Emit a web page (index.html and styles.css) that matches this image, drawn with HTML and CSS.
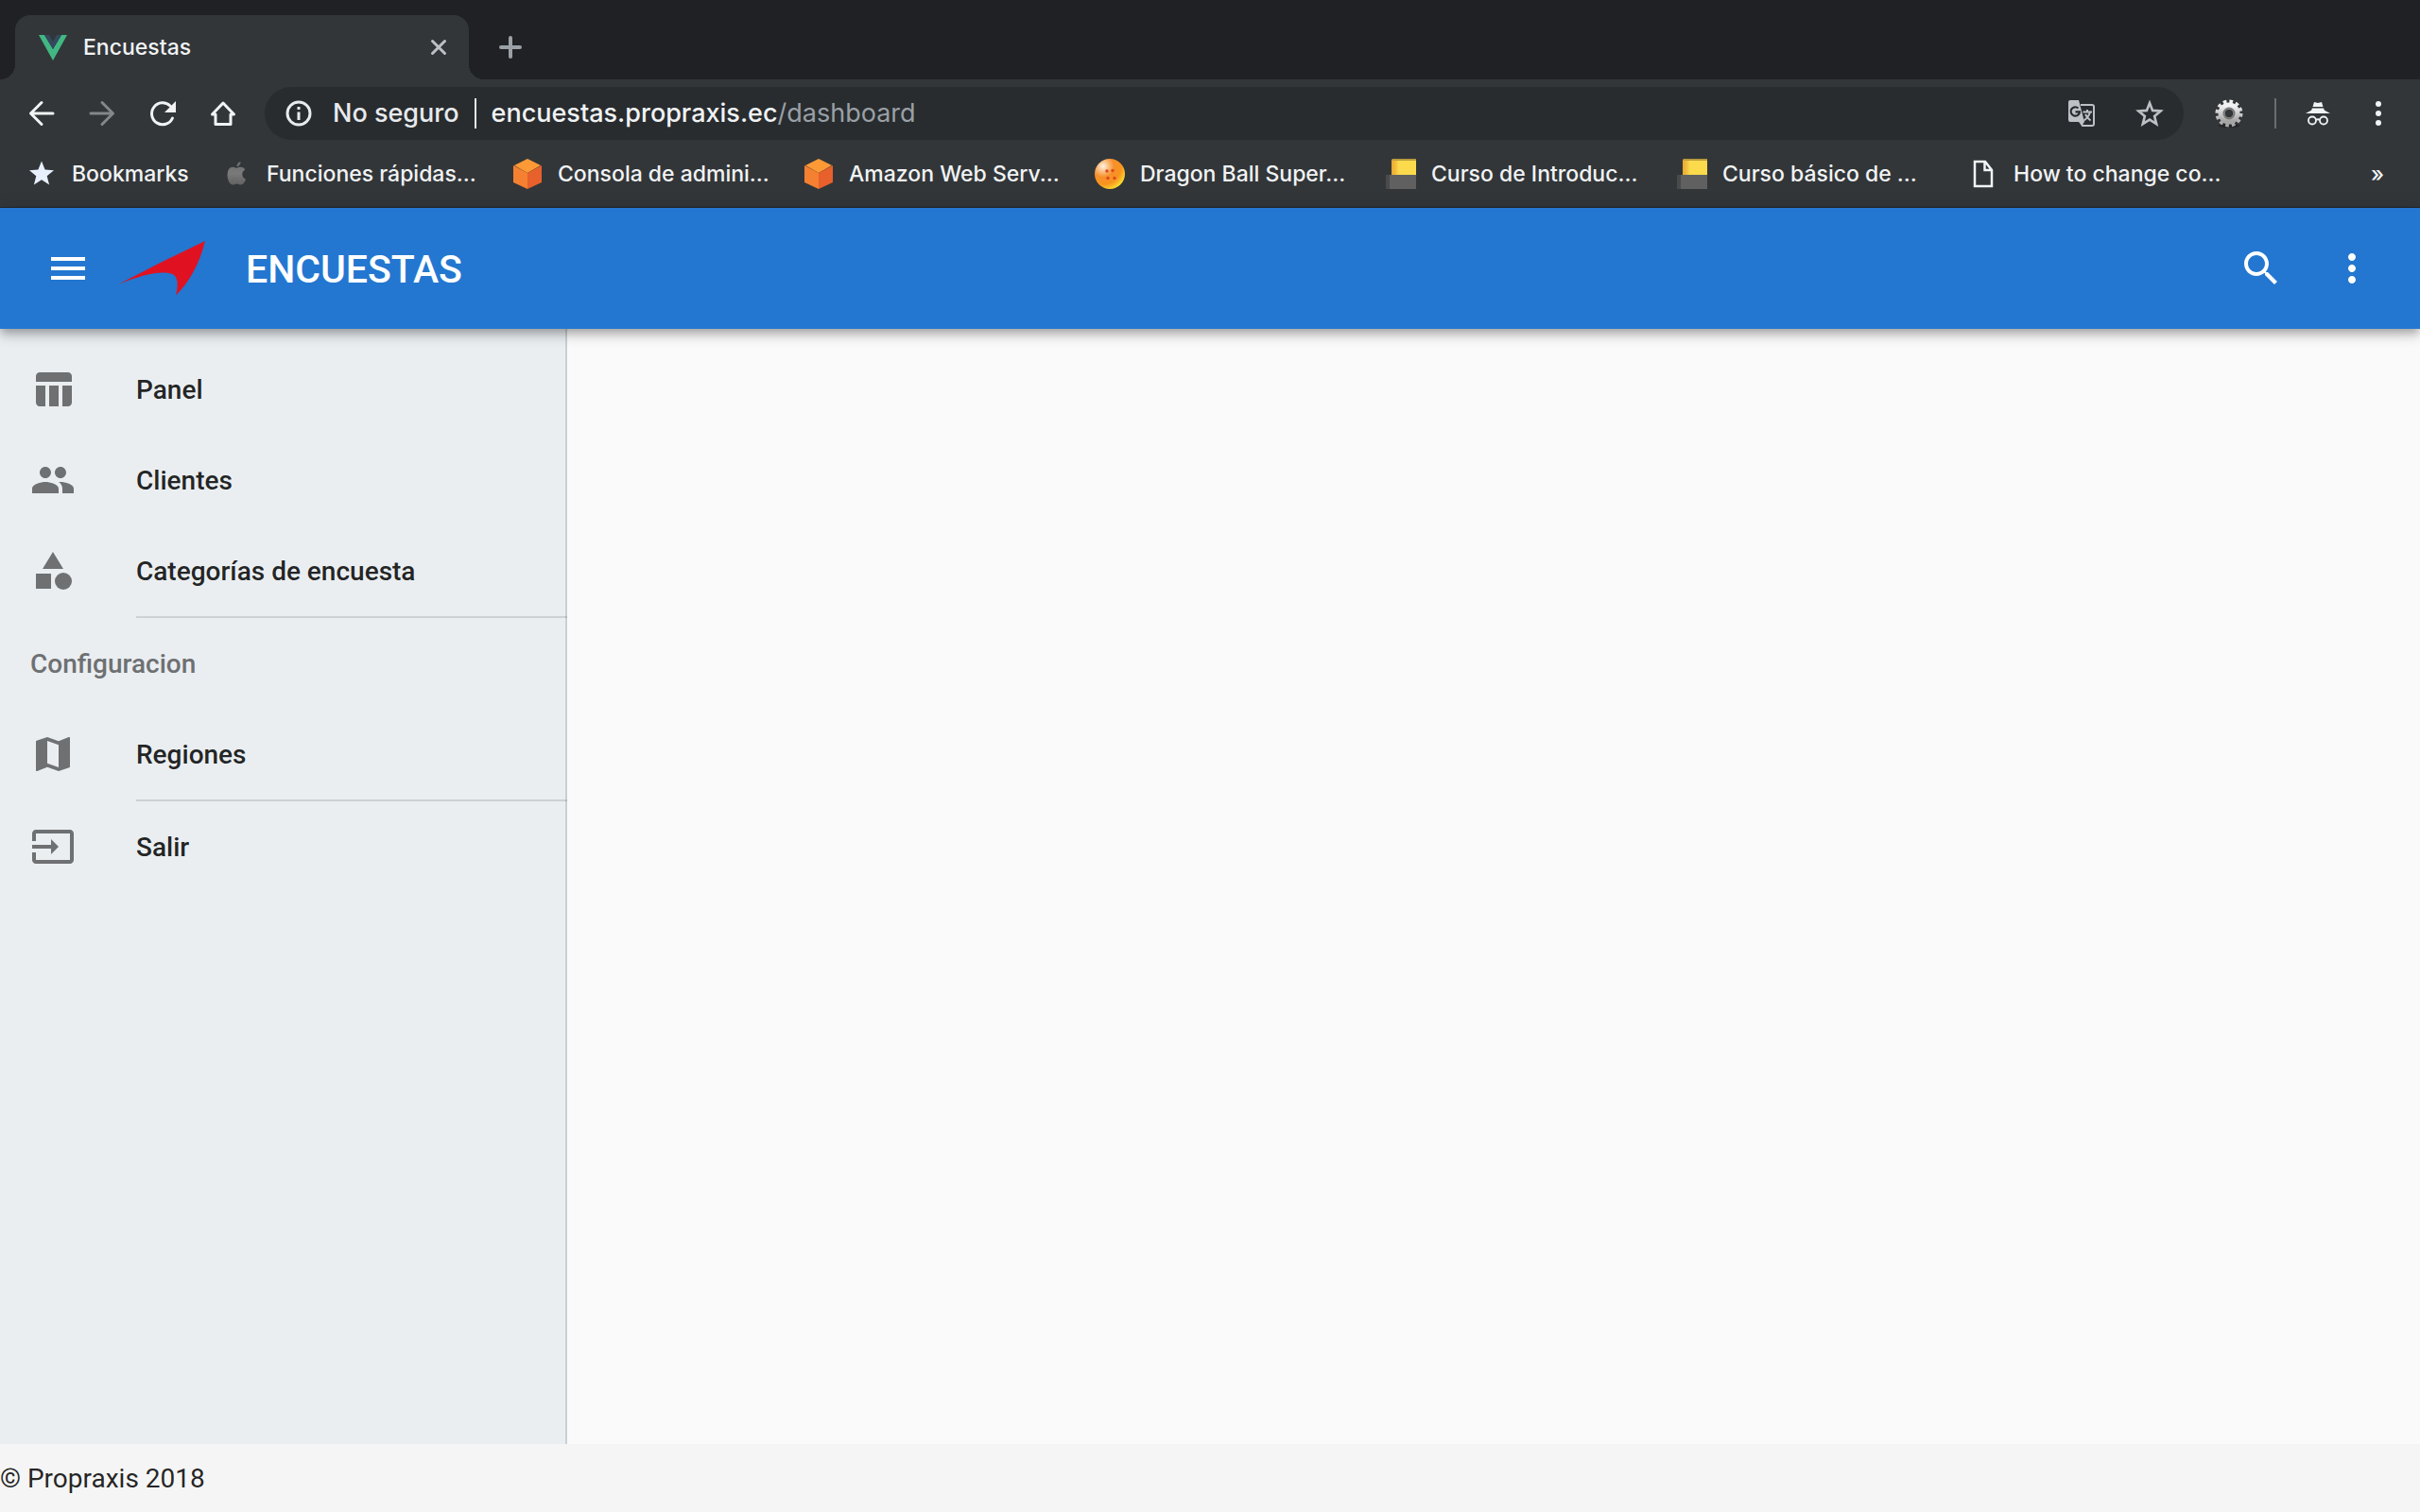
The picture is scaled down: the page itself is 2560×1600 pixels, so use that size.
FILE: index.html
```html
<!DOCTYPE html>
<html lang="es">
<head>
<meta charset="utf-8">
<meta name="viewport" content="width=device-width, initial-scale=1">
<title>Encuestas</title>
<link rel="stylesheet" href="styles.css">
</head>
<body>
<svg class="defs" aria-hidden="true">
  <defs>
    <linearGradient id="book-cover" x1="0" x2="1" y1="0" y2="0"><stop offset="0" stop-color="#e9a92f"/><stop offset=".2" stop-color="#f5c342"/><stop offset=".3" stop-color="#fbdb4c"/></linearGradient>
    <linearGradient id="apple-fill" x1="0" x2="0" y1="0" y2="1"><stop offset="0" stop-color="#6c6c6c"/><stop offset=".5" stop-color="#7a7a7a"/><stop offset="1" stop-color="#626262"/></linearGradient>
    <linearGradient id="gear-fill" x1="0" x2="0" y1="0" y2="1"><stop offset="0" stop-color="#f2f2f2"/><stop offset="1" stop-color="#a5a5a5"/></linearGradient>
    <radialGradient id="ball-fill" cx=".28" cy=".25" r=".8"><stop offset="0" stop-color="#fff4e4"/><stop offset=".2" stop-color="#fbc48c"/><stop offset=".45" stop-color="#f78f2a"/><stop offset=".75" stop-color="#f8941f"/><stop offset="1" stop-color="#fbd72e"/></radialGradient>
  </defs>
  <symbol id="cube" viewBox="0 0 32 32">
    <path fill="#fd9a36" d="M16 0l14 7-14 8L2 7z"/>
    <path fill="#f58031" d="M1 7l15 8v17L1 25z"/>
    <path fill="#e8602b" d="M31 7l-15 8v17l15-7z"/>
  </symbol>
  <symbol id="book" viewBox="0 0 32 32">
    <path fill="url(#book-cover)" d="M6 2q0-2 2-2h24v18H6z"/>
    <path fill="#b89b3d" d="M8 0h24v2H7z"/>
    <path fill="#484a4b" d="M0 17h4v15H0z"/>
    <path fill="#606060" d="M4 17h28v15H4z"/>
  </symbol>
</svg>

<header class="browser">
  <div class="tab-strip">
    <div class="tab">
      <svg class="icon" viewBox="0 0 32 32" aria-hidden="true"><path fill="#41b883" d="M1 3h6l9 15 9-15h6L16 30z"/><path fill="#35495e" d="M7 3h5l4 7 4-7h5l-9 15z"/></svg>
      <span class="tab-title">Encuestas</span>
      <button class="plain tab-close" aria-label="Cerrar pestaña"><svg class="icon" viewBox="0 0 32 32"><path fill="none" stroke="#bdc1c6" stroke-width="3" stroke-linecap="round" d="M9.500 9.500l13 13m0-13l-13 13"/></svg></button>
    </div>
    <button class="plain tab-new" aria-label="Nueva pestaña"><svg class="icon" viewBox="0 0 32 32"><path fill="none" stroke="#9aa0a6" stroke-width="4" stroke-linecap="round" d="M6 16h20M16 6v20"/></svg></button>
  </div>

  <div class="toolbar">
    <div class="nav-buttons">
      <button class="plain" aria-label="Atrás"><svg class="icon" viewBox="0 0 32 32"><path fill="none" stroke="#f1f3f4" stroke-width="3" stroke-linecap="round" stroke-linejoin="round" d="M28 16H5M16 4.500L4.500 16 16 27.500"/></svg></button>
      <button class="plain" aria-label="Adelante"><svg class="icon" viewBox="0 0 32 32"><path fill="none" stroke="#84878a" stroke-width="3" stroke-linecap="round" stroke-linejoin="round" d="M4 16h23M16 4.500L27.500 16 16 27.500"/></svg></button>
      <button class="plain" aria-label="Recargar"><svg class="icon" viewBox="0 0 32 32"><path fill="none" stroke="#f1f3f4" stroke-width="3" stroke-linecap="round" d="M26.500 21A11.500 11.500 0 1 1 24 8"/><path fill="#f1f3f4" d="M30 3v12H18z"/></svg></button>
      <button class="plain" aria-label="Inicio"><svg class="icon" viewBox="0 0 32 32"><path fill="none" stroke="#f1f3f4" stroke-width="3" stroke-linejoin="round" stroke-linecap="round" d="M4.500 17L16 5l11.500 12H24v10.500H8V17z"/></svg></button>
    </div>
    <div class="omnibox">
      <svg class="icon" viewBox="0 0 32 32" aria-hidden="true"><circle cx="16" cy="16" r="12" fill="none" stroke="#e8eaed" stroke-width="3"/><path fill="#e8eaed" d="M14.500 9h3v3h-3zM14.500 14.500h3V23h-3z"/></svg>
      <span class="security">No seguro</span>
      <span class="omnibox-rule"></span>
      <div class="url" role="textbox" aria-label="Dirección">encuestas.propraxis.ec<span class="url-path">/dashboard</span></div>
      <button class="plain" aria-label="Traducir"><svg class="icon" viewBox="0 0 32 32"><path fill="none" stroke="#bdc1c6" stroke-width="2" d="M15 7h12q2 0 2 2v18q0 2-2 2H17l-2-5"/><path fill="#bdc1c6" d="M4 2h9l6 23H4q-2 0-2-2V4q0-2 2-2z"/><path fill="#bdc1c6" d="M13 25h6l-3 4z"/><path fill="none" stroke="#282c2f" stroke-width="2.200" d="M12.500 10.500A4.700 4.700 0 1 0 14 14.300H9.500"/><path fill="none" stroke="#bdc1c6" stroke-width="2" d="M17.500 14.500H27M22 12v2.500M25 14.500q-1.500 5.500-6.500 9M20 17q2 4 5.500 6.500"/></svg></button>
      <button class="plain" aria-label="Añadir a favoritos"><svg class="icon" viewBox="0 0 32 32"><path fill="none" stroke="#bdc1c6" stroke-width="2.600" d="M16 5l3.100 7.900 8.500.600-6.500 5.400 2.100 8.300L16 22.600l-7.200 4.600 2.100-8.300-6.500-5.400 8.500-.600z"/></svg></button>
    </div>
    <button class="plain" aria-label="Extensión"><svg class="icon" viewBox="0 0 32 32"><ellipse cx="16" cy="29" rx="11" ry="2" fill="#222426"/><circle cx="16" cy="16" r="12.500" fill="none" stroke="url(#gear-fill)" stroke-width="4" stroke-dasharray="3.600 2.945"/><circle cx="16" cy="16" r="8" fill="none" stroke="url(#gear-fill)" stroke-width="7"/><circle cx="16" cy="16" r="5.500" fill="none" stroke="#777" stroke-width="2"/></svg></button>
    <span class="toolbar-rule"></span>
    <button class="plain incognito" aria-label="Incógnito"><svg class="icon" viewBox="0 0 32 32"><path fill="#f1f3f4" d="M10.500 9L12 4l4 1 4-1 1.500 5zM3 16l6-3.200 1-2.300h12l1 2.300 6 3.200z"/><g fill="none" stroke="#f1f3f4" stroke-width="1.800"><circle cx="10" cy="23.500" r="4"/><circle cx="22" cy="23.500" r="4"/><path d="M14 23q2-1.500 4 0"/></g></svg></button>
    <button class="plain browser-menu" aria-label="Menú del navegador"><svg class="icon" viewBox="0 0 32 32" fill="#f1f3f4"><circle cx="16" cy="6" r="3"/><circle cx="16" cy="16" r="3"/><circle cx="16" cy="26" r="3"/></svg></button>
  </div>

  <nav class="bookmarks" aria-label="Marcadores">
    <a class="bookmark bookmark-root" href="#"><svg class="icon" viewBox="0 0 32 32"><path fill="#e8f0fe" d="M16 2.500l3.600 9 9.400.700-7.300 6 2.400 9.300L16 22.300l-8.100 5.200 2.400-9.300-7.300-6 9.400-.700z"/></svg>Bookmarks</a>
    <a class="bookmark" href="#"><svg class="icon" viewBox="0 0 32 32"><path fill="url(#apple-fill)" d="M16.500 8.500q0-4.500 4-5.500.300 4-4 5.500zM16 10q2-1.200 4.500-1.200 3 0 4.800 2.400-3 2-3 5.300 0 3.600 3.700 5.300-2 5.700-5 5.700-1.500 0-2.500-.500-2-.900-4 0-1.500.700-2.500.500C8.500 27 6.500 21.500 6.500 17q0-8 6-8.200 1.500 0 3.500 1.200z"/></svg>Funciones rápidas...</a>
    <a class="bookmark" href="#"><svg class="icon"><use href="#cube"/></svg>Consola de admini...</a>
    <a class="bookmark" href="#"><svg class="icon"><use href="#cube"/></svg>Amazon Web Serv...</a>
    <a class="bookmark" href="#"><svg class="icon" viewBox="0 0 32 32"><circle cx="16" cy="16" r="16" fill="url(#ball-fill)"/><g fill="#dc4a1c"><circle cx="13" cy="13" r="1.700"/><circle cx="19" cy="12.500" r="1.700"/><circle cx="14" cy="20.500" r="1.700"/><circle cx="21" cy="20.500" r="1.700"/></g></svg>Dragon Ball Super...</a>
    <a class="bookmark" href="#"><svg class="icon"><use href="#book"/></svg>Curso de Introduc...</a>
    <a class="bookmark" href="#"><svg class="icon"><use href="#book"/></svg>Curso básico de ...</a>
    <a class="bookmark" href="#"><svg class="icon" viewBox="0 0 32 32"><path fill="none" stroke="#f1f3f4" stroke-width="2.500" d="M7 3h11l7 9v17H7zM17.500 3v9H25"/></svg>How to change co...</a>
    <button class="plain bookmarks-more" aria-label="Más marcadores">»</button>
  </nav>
</header>

<header class="app-bar">
  <button class="plain" aria-label="Menú"><svg class="icon-lg" viewBox="0 0 24 24"><path d="M3 18h18v-2H3v2zm0-5h18v-2H3v2zm0-7v2h18V6H3z"/></svg></button>
  <svg class="logo" viewBox="0 0 94 60" aria-hidden="true"><path fill="#e01222" d="M93 1Q84 37 62 58.500q5-20-5-23Q40 31 1 47 46 23 93 1z"/></svg>
  <h1 class="app-title">ENCUESTAS</h1>
  <button class="plain" aria-label="Buscar"><svg class="icon-lg" viewBox="0 0 24 24"><path d="M15.500 14h-.790l-.280-.270C15.410 12.590 16 11.110 16 9.500 16 5.910 13.090 3 9.500 3S3 5.910 3 9.500 5.910 16 9.500 16c1.610 0 3.090-.590 4.230-1.570l.270.280v.790l5 4.990L20.490 19l-4.990-5zm-6 0C7.010 14 5 11.990 5 9.500S7.010 5 9.500 5 14 7.010 14 9.500 11.990 14 9.500 14z"/></svg></button>
  <button class="plain app-more" aria-label="Más opciones"><svg class="icon-lg" viewBox="0 0 24 24"><path d="M12 8c1.100 0 2-.900 2-2s-.900-2-2-2-2 .900-2 2 .900 2 2 2zm0 2c-1.100 0-2 .900-2 2s.900 2 2 2 2-.900 2-2-.900-2-2-2zm0 6c-1.100 0-2 .900-2 2s.900 2 2 2 2-.900 2-2-.900-2-2-2z"/></svg></button>
</header>

<div class="workspace">
  <nav class="drawer" aria-label="Navegación">
    <a class="drawer-item" href="#"><svg class="icon-lg" viewBox="0 0 24 24"><path d="M10 10.020h5V21h-5zM17 21h3c1.100 0 2-.900 2-2v-9h-5v11zm3-18H5c-1.100 0-2 .900-2 2v3h19V5c0-1.100-.900-2-2-2zM3 19c0 1.100.900 2 2 2h3V10H3v9z"/></svg><span class="drawer-label">Panel</span></a>
    <a class="drawer-item" href="#"><svg class="icon-lg" viewBox="0 0 24 24"><path d="M16 11c1.660 0 2.990-1.340 2.990-3S17.660 5 16 5c-1.660 0-3 1.340-3 3s1.340 3 3 3zm-8 0c1.660 0 2.990-1.340 2.990-3S9.660 5 8 5C6.340 5 5 6.340 5 8s1.340 3 3 3zm0 2c-2.330 0-7 1.170-7 3.500V19h14v-2.500c0-2.330-4.670-3.500-7-3.500zm8 0c-.290 0-.620.020-.970.050 1.160.840 1.970 1.970 1.970 3.450V19h6v-2.500c0-2.330-4.670-3.500-7-3.500z"/></svg><span class="drawer-label">Clientes</span></a>
    <a class="drawer-item" href="#"><svg class="icon-lg" viewBox="0 0 24 24"><path d="M12 2l-5.500 9h11z"/><circle cx="17.500" cy="17.500" r="4.500"/><path d="M3 13.500h8v8H3z"/></svg><span class="drawer-label">Categorías de encuesta</span></a>
    <hr class="drawer-rule">
    <h2 class="drawer-heading"><span class="drawer-label">Configuracion</span></h2>
    <a class="drawer-item" href="#"><svg class="icon-lg" viewBox="0 0 24 24"><path d="M20.500 3l-.160.030L15 5.100 9 3 3.360 4.900c-.210.070-.360.250-.360.480V20.500c0 .280.220.500.500.500l.160-.030L9 18.900l6 2.100 5.640-1.900c.210-.070.360-.250.360-.480V3.500c0-.280-.220-.500-.500-.500zM15 19l-6-2.110V5l6 2.110V19z"/></svg><span class="drawer-label">Regiones</span></a>
    <hr class="drawer-rule">
    <a class="drawer-item" href="#"><svg class="icon-lg" viewBox="0 0 24 24"><path d="M21 3.010H3c-1.100 0-2 .900-2 2V9h2V4.990h18v14.030H3V15H1v4.010c0 1.100.900 1.980 2 1.980h18c1.100 0 2-.880 2-1.980v-14c0-1.110-.900-2-2-2zM11 16l4-4-4-4v3H1v2h10v3z"/></svg><span class="drawer-label">Salir</span></a>
  </nav>
  <main class="content"></main>
</div>

<footer class="footer">© Propraxis 2018</footer>
</body>
</html>
```
FILE: styles.css
```css
* {
  box-sizing: border-box;
}

body {
  display: flex;
  flex-direction: column;
  min-height: 100vh;
  margin: 0;
  background: #fafafa;
  color: rgba(0, 0, 0, 0.87);
  font: 400 28px/40px Roboto, "Liberation Sans", sans-serif;
}

a {
  color: inherit;
  text-decoration: none;
}

.plain {
  flex: none;
  display: flex;
  padding: 0;
  border: 0;
  background: none;
  color: inherit;
  font: inherit;
  cursor: pointer;
}

.defs {
  position: absolute;
  width: 0;
  height: 0;
}

.icon {
  flex: none;
  display: block;
  width: 32px;
  height: 32px;
}

.icon-lg {
  flex: none;
  display: block;
  width: 48px;
  height: 48px;
  fill: currentColor;
}

/* Browser frame */

.browser {
  border-bottom: 1px solid #26282a;
  background: #323639;
  color: #f1f3f4;
  font: 500 23px/32px Inter, "Liberation Sans", sans-serif;
}

.tab-strip {
  display: flex;
  align-items: center;
  gap: 28px;
  padding: 16px 16px 0;
  background: #202124;
}

.tab {
  position: relative;
  display: flex;
  align-items: center;
  gap: 16px;
  width: 480px;
  height: 68px;
  padding: 0 16px 0 24px;
  border-radius: 16px 16px 0 0;
  background: #323639;
}

.tab::before,
.tab::after {
  content: "";
  position: absolute;
  bottom: 0;
  width: 16px;
  height: 16px;
}

.tab::before {
  right: 100%;
  background: radial-gradient(circle at 0 0, #202124 16px, #323639 16px);
}

.tab::after {
  left: 100%;
  background: radial-gradient(circle at 100% 0, #202124 16px, #323639 16px);
}

.tab-title {
  flex: 1;
}

.toolbar {
  display: flex;
  align-items: center;
  height: 72px;
  padding: 0 28px;
}

.nav-buttons {
  display: flex;
  gap: 32px;
  margin-right: 28px;
}

.omnibox {
  flex: 1;
  display: flex;
  align-items: center;
  height: 56px;
  margin-right: 32px;
  padding: 0 20px;
  border-radius: 28px;
  background: #282c2f;
  font-size: 27px;
  white-space: nowrap;
}

.security {
  margin: 0 16px 0 20px;
  color: #e8eaed;
}

.omnibox-rule,
.toolbar-rule {
  width: 2px;
  height: 32px;
  background: #e8eaed;
}

.url {
  flex: 1;
  margin-left: 16px;
}

.url-path {
  color: #9aa0a6;
  font-weight: 400;
}

.omnibox .plain {
  margin-left: 40px;
}

.toolbar-rule {
  margin: 0 28px 0 32px;
  background: #6a6d70;
}

.browser-menu {
  margin-left: 32px;
}

.bookmarks {
  display: flex;
  align-items: center;
  height: 63px;
  padding: 0 28px 8px;
  white-space: nowrap;
}

.bookmark {
  flex: none;
  display: flex;
  align-items: center;
  gap: 16px;
  width: 308px;
}

.bookmark-root {
  width: 206px;
}

.bookmarks-more {
  margin-left: auto;
  padding: 0 10px;
}

/* Application bar */

.app-bar {
  position: relative;
  z-index: 1;
  display: flex;
  align-items: center;
  height: 128px;
  padding: 0 48px;
  background: #2377d0;
  box-shadow: 0 4px 8px -2px rgba(0, 0, 0, 0.2), 0 8px 10px rgba(0, 0, 0, 0.14), 0 2px 20px rgba(0, 0, 0, 0.12);
  color: #fff;
}

.logo {
  flex: none;
  width: 94px;
  height: 60px;
  margin: 0 42px 0 28px;
}

.app-title {
  flex: 1;
  margin: 0;
  padding-top: 2px;
  font-weight: 500;
  font-size: 41px;
}

.app-more {
  margin-left: 48px;
}

/* Drawer and content */

.workspace {
  flex: 1;
  display: flex;
}

.drawer {
  flex: none;
  width: 600px;
  padding-top: 16px;
  background: #eaeef1;
  box-shadow: inset -2px 0 #c9cfd3;
  font-weight: 500;
}

.drawer-item,
.drawer-heading {
  display: flex;
  align-items: center;
  height: 96px;
  padding: 0 32px;
}

.drawer-item {
  gap: 64px;
}

.drawer-item .icon-lg {
  fill: #6e7072;
}

.drawer-label {
  padding-top: 2px;
}

.drawer-heading {
  margin: 0;
  color: #6e7072;
  font-weight: 500;
  font-size: 28px;
}

.drawer-rule {
  height: 2px;
  margin: 0 0 0 144px;
  border: 0;
  background: rgba(0, 0, 0, 0.12);
}

.content {
  flex: 1;
}

.footer {
  padding: 17px 0 15px;
  background: #f5f5f5;
}
```
